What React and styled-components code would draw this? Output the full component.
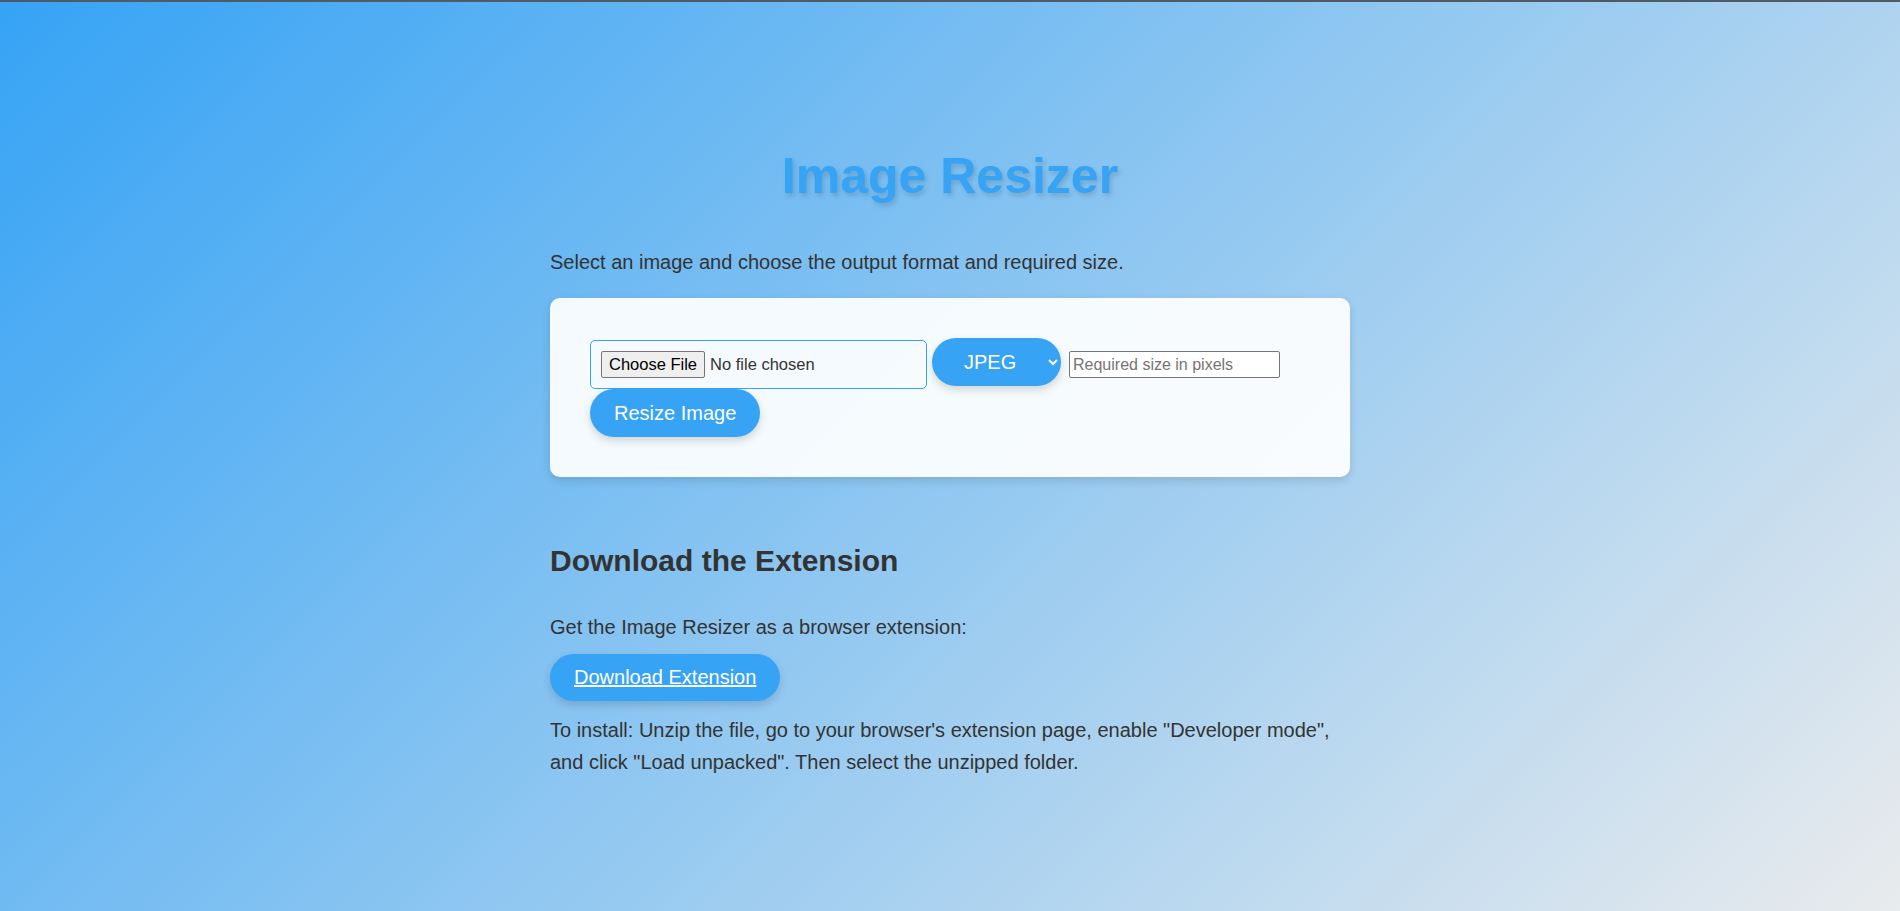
import React from "react";
import styled, {createGlobalStyle} from "styled-components";

const GlobalStyle = createGlobalStyle`
  * {
    box-sizing: border-box;
  }

  body {
    margin: 0;
    font-family: "Liberation Sans", Arial, sans-serif;
    color: #333;
  }
`;

export default function App() {
    return (
        <>
            <GlobalStyle/>
            <Page>
                <Container>
                    <Title>Image Resizer</Title>
                    <Lead>Select an image and choose the output format and required size.</Lead>
                    <Card>
                        <FormRow>
                            <FileInput type="file" accept="image/*"/>
                            <FormatSelect defaultValue="jpeg">
                                <option value="jpeg">JPEG</option>
                                <option value="png">PNG</option>
                                <option value="webp">WEBP</option>
                            </FormatSelect>
                            <SizeInput type="number" placeholder="Required size in pixels"/>
                            <PillButton type="button">Resize Image</PillButton>
                        </FormRow>
                    </Card>

                    <Section>
                        <SectionTitle>Download the Extension</SectionTitle>
                        <Text>Get the Image Resizer as a browser extension:</Text>
                        <ButtonRow>
                            <PillLink href="#">Download Extension</PillLink>
                        </ButtonRow>
                        <Text>
                            To install: Unzip the file, go to your browser's extension page, enable "Developer mode",
                            and click "Load unpacked". Then select the unzipped folder.
                        </Text>
                    </Section>
                </Container>
            </Page>
        </>
    );
}

const Page = styled.div`
  min-height: 100vh;
  border-top: 2px solid #4f5a64;
  background: linear-gradient(135deg, #36a3f5 0%, #e9ebed 100%);
`;

const Container = styled.main`
  max-width: 800px;
  margin: 0 auto;
  padding-top: 144px;
`;

const Title = styled.h1`
  margin: 0 0 40px;
  font-size: 50px;
  line-height: 60px;
  font-weight: 700;
  text-align: center;
  color: #36a3f5;
  text-shadow: 2px 3px 5px rgba(0, 0, 0, 0.15);
`;

const Lead = styled.p`
  margin: 0 0 20px;
  font-size: 20px;
  line-height: 32px;
`;

const Card = styled.div`
  padding: 40px;
  border-radius: 10px;
  background: rgba(255, 255, 255, 0.92);
  box-shadow: 0 4px 10px rgba(0, 0, 0, 0.12);
`;

const FormRow = styled.div`
  display: flex;
  flex-wrap: wrap;
  align-items: flex-start;
  column-gap: 5px;
`;

const FileInput = styled.input`
  width: 337px;
  height: 49px;
  margin-top: 2px;
  padding: 10px;
  border: 1px solid #36a3f5;
  border-radius: 5px;
  font-family: "Liberation Sans", Arial, sans-serif;
  font-size: 16.5px;
  color: #333;
  background: transparent;

  &::file-selector-button {
    font-family: "Liberation Sans", Arial, sans-serif;
    font-size: 16.5px;
    padding: 3px 7px;
    margin-right: 5px;
    border: 1px solid #767676;
    border-radius: 2px;
    background: #efefef;
    color: #000;
  }
`;

const FormatSelect = styled.select`
  width: 129px;
  height: 48px;
  padding: 0 24px 0 28px;
  border: none;
  border-radius: 24px;
  font-family: "Liberation Sans", Arial, sans-serif;
  font-size: 20px;
  color: #fff;
  background-color: #36a3f5;
  box-shadow: 0 4px 8px rgba(0, 0, 0, 0.15);
`;

const SizeInput = styled.input`
  width: 211px;
  height: 27px;
  margin: 13px 0 0 3px;
  padding: 1px 3px;
  border: 1px solid #767676;
  border-radius: 2px;
  font-family: "Liberation Sans", Arial, sans-serif;
  font-size: 16px;
  background: #fff;

  &::placeholder {
    color: #757575;
  }
`;

const pill = `
  display: inline-block;
  padding: 12px 24px;
  border: none;
  border-radius: 24px;
  font-family: "Liberation Sans", Arial, sans-serif;
  font-size: 20px;
  line-height: 23px;
  color: #fff;
  background: #36a3f5;
  box-shadow: 0 4px 8px rgba(0, 0, 0, 0.15);
  cursor: pointer;
`;

const PillButton = styled.button`
  ${pill}
  height: 48px;
`;

const PillLink = styled.a`
  ${pill}
  text-decoration: underline;
`;

const Section = styled.section`
  margin-top: 66px;
`;

const SectionTitle = styled.h2`
  margin: 0 0 32px;
  font-size: 30px;
  line-height: 36px;
  font-weight: 700;
  color: #333;
`;

const Text = styled.p`
  margin: 0;
  font-size: 20px;
  line-height: 32px;
`;

const ButtonRow = styled.div`
  margin: 11px 0 13px;
`;
